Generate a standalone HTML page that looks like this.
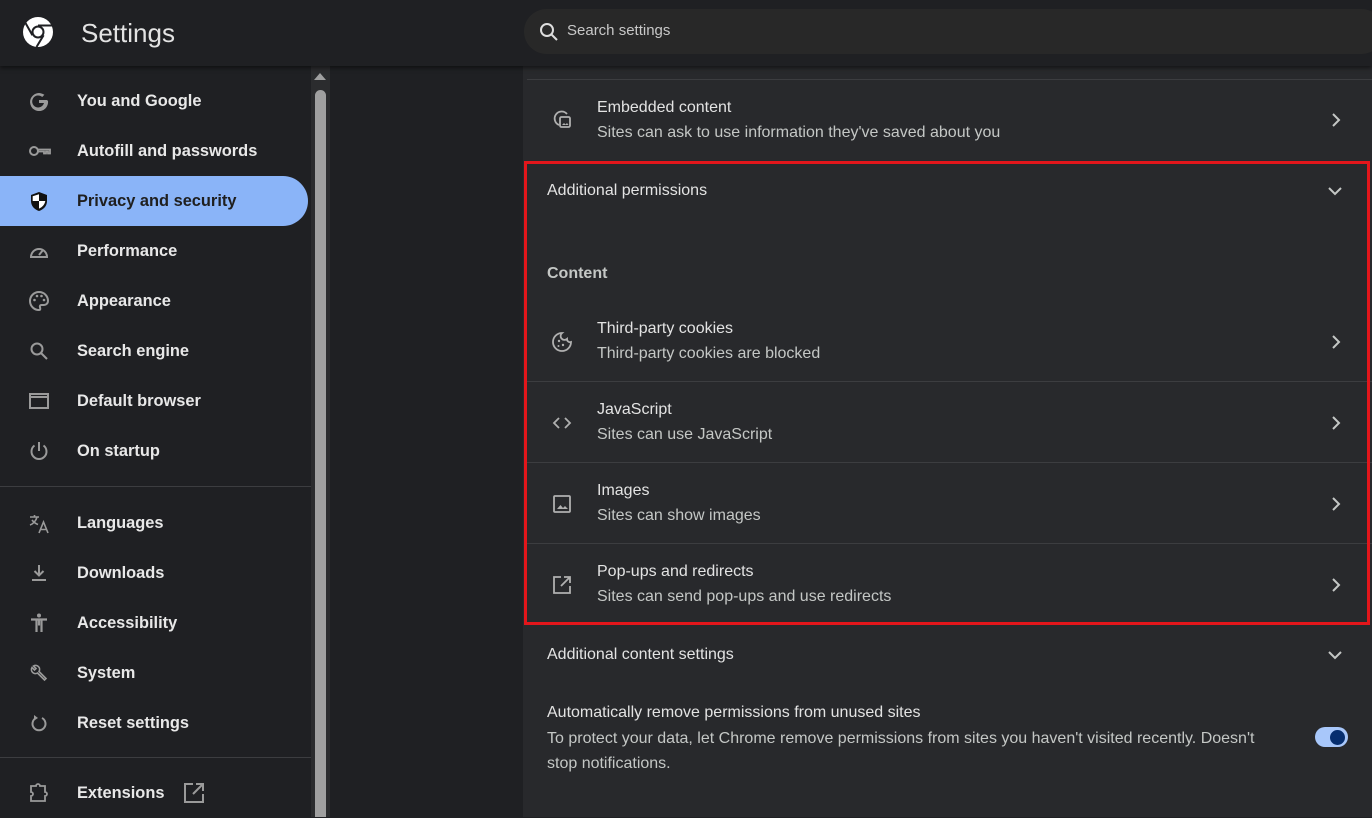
<!DOCTYPE html>
<html><head><meta charset="utf-8"><style>
*{margin:0;padding:0;box-sizing:border-box}
body{width:1372px;height:817px;overflow:hidden;background:#1f2023;font-family:"Liberation Sans",sans-serif;position:relative;color:#e3e3e3}
.a{position:absolute}
.hdr{left:0;top:0;width:1372px;height:66px;background:#1f2023;box-shadow:0 2px 4px rgba(0,0,0,.5);z-index:2}
.title{left:81px;top:18px;font-size:26px;color:#e3e3e3}
.search{left:524px;top:9px;width:860px;height:45px;border-radius:23px;background:#282828}
.search span{position:absolute;left:43px;top:13px;font-size:15px;color:#c8c8c8}
.nav{left:0;height:50px;width:308px;font-size:16.4px;font-weight:bold;color:#e8e8e8}
.nav span{position:absolute;left:77px;top:16px}
.nav svg{position:absolute;left:28px;top:14px}
.sel{background:#8ab4f8;border-radius:0 25px 25px 0;color:#1f1f1f}
.sep{left:0;width:311px;height:1px;background:#3c3d40}
.track{left:311px;top:66px;width:19px;height:751px;background:#2b2c2e}
.thumb{left:315px;top:90px;width:11px;height:727px;background:#a0a0a0;border-radius:6px 6px 0 0}
.card{left:523px;top:66px;width:849px;height:751px;background:#28292c}
.row{left:527px;width:845px;height:81px;border-top:1px solid #3c3d40}
.t1{position:absolute;left:70px;top:17px;font-size:16px;color:#e3e3e3}
.t2{position:absolute;left:70px;top:42px;font-size:16px;color:#c4c7c5}
.row svg.i{position:absolute;left:24px;top:30px}
.chev{position:absolute;right:30px;top:33px}
</style></head><body>
<div class="a hdr">
 <svg class="a" style="left:22px;top:16px" width="32" height="32" viewBox="0 0 32 32"><circle cx="16" cy="16" r="15" fill="#fff"/><circle cx="16" cy="16" r="6.5" fill="#1f2023"/><circle cx="16" cy="16" r="4.5" fill="#fff"/><path d="M16 9.5H30M10.4 19.2L3.5 7M21.6 19.2L14.5 31" stroke="#1f2023" stroke-width="2"/></svg>
 <div class="a title">Settings</div>
 <div class="a search"><svg style="position:absolute;left:15px;top:13px" width="20" height="20" viewBox="0 0 20 20"><circle cx="8" cy="8" r="6" stroke="#ddd" stroke-width="2" fill="none"/><path d="M12.5 12.5L18 18" stroke="#ddd" stroke-width="2"/></svg><span>Search settings</span></div>
</div>
<div class="a track"></div>
<svg class="a" style="left:313px;top:71px" width="14" height="10"><path d="M1 9L7 2L13 9Z" fill="#a0a0a0"/></svg>
<div class="a thumb"></div>

<div class="a nav" style="top:76px"><svg width="22" height="22" viewBox="0 0 22 22"><path d="M19 10H11v3h5a6 6 0 1 1-1.8-6l2.2-2.2A9 9 0 1 0 20 11z" fill="#9a9a9a"/></svg><span>You and Google</span></div>
<div class="a nav" style="top:126px"><svg width="24" height="22" viewBox="0 0 24 22"><circle cx="6" cy="11" r="4" stroke="#9a9a9a" stroke-width="2" fill="none"/><path d="M10 9.5h12v4h-2v-2h-2v2h-2v-2h-6" stroke="#9a9a9a" stroke-width="1.8" fill="none"/></svg><span>Autofill and passwords</span></div>
<div class="a nav sel" style="top:176px"><svg width="22" height="22" viewBox="0 0 22 22"><path d="M11 2L3 5v6c0 5 3.5 8.5 8 10 4.5-1.5 8-5 8-10V5z" fill="#111"/><path d="M11 11h6.3c-.6 3.5-3 6.2-6.3 7.6zM11 4.2V11H4.7V6.3z" fill="#fff"/></svg><span>Privacy and security</span></div>
<div class="a nav" style="top:226px"><svg width="22" height="22" viewBox="0 0 22 22"><path d="M3 17a8 8 0 1 1 16 0z" stroke="#9a9a9a" stroke-width="2" fill="none"/><path d="M11 15l4-5" stroke="#9a9a9a" stroke-width="2"/></svg><span>Performance</span></div>
<div class="a nav" style="top:276px"><svg width="22" height="22" viewBox="0 0 22 22"><path d="M11 2a9 9 0 0 0 0 18c1.5 0 1.5-1.5 1-2.5s0-2.5 1.5-2.5H16a4 4 0 0 0 4-4c0-5-4-9-9-9z" stroke="#9a9a9a" stroke-width="2" fill="none"/><circle cx="6.5" cy="10" r="1.3" fill="#9a9a9a"/><circle cx="9" cy="6" r="1.3" fill="#9a9a9a"/><circle cx="13.5" cy="6" r="1.3" fill="#9a9a9a"/><circle cx="16" cy="10" r="1.3" fill="#9a9a9a"/></svg><span>Appearance</span></div>
<div class="a nav" style="top:326px"><svg width="22" height="22" viewBox="0 0 22 22"><circle cx="9" cy="9" r="5.5" stroke="#9a9a9a" stroke-width="2" fill="none"/><path d="M13 13l6 6" stroke="#9a9a9a" stroke-width="2"/></svg><span>Search engine</span></div>
<div class="a nav" style="top:376px"><svg width="22" height="22" viewBox="0 0 22 22"><rect x="2" y="4" width="18" height="14" stroke="#9a9a9a" stroke-width="2" fill="none"/><path d="M2 7h18" stroke="#9a9a9a" stroke-width="2"/></svg><span>Default browser</span></div>
<div class="a nav" style="top:426px"><svg width="22" height="22" viewBox="0 0 22 22"><path d="M11 2v9M6.5 5.5a7.5 7.5 0 1 0 9 0" stroke="#9a9a9a" stroke-width="2" fill="none"/></svg><span>On startup</span></div>
<div class="a sep" style="top:486px"></div>
<div class="a nav" style="top:498px"><svg width="24" height="24" viewBox="0 0 24 24"><path d="M2 5h9M6.5 3v2M9 5c-1 4-4 7-7 8M4 8c1.5 2 3.5 3.5 6 4.5M11 21l4.5-11L20 21M12.5 17.5h6" stroke="#9a9a9a" stroke-width="1.6" fill="none"/></svg><span>Languages</span></div>
<div class="a nav" style="top:548px"><svg width="22" height="22" viewBox="0 0 22 22"><path d="M11 3v10M6.5 9l4.5 4.5L15.5 9M4 18h14" stroke="#9a9a9a" stroke-width="2" fill="none"/></svg><span>Downloads</span></div>
<div class="a nav" style="top:598px"><svg width="22" height="22" viewBox="0 0 22 22"><circle cx="11" cy="3.5" r="2" fill="#9a9a9a"/><path d="M3 7.5h16M11 7.5v6M8.5 8v12M13.5 8v12" stroke="#9a9a9a" stroke-width="2.2"/></svg><span>Accessibility</span></div>
<div class="a nav" style="top:648px"><svg width="22" height="22" viewBox="0 0 22 22"><path d="M4 5.5a4 4 0 0 0 5.5 5.5l7 7 1.5-1.5-7-7A4 4 0 0 0 5.5 4l2.5 2.5-1.5 1.5z" stroke="#9a9a9a" stroke-width="1.6" fill="none"/></svg><span>System</span></div>
<div class="a nav" style="top:698px"><svg width="22" height="22" viewBox="0 0 22 22"><path d="M8 6a6.5 6.5 0 1 0 6 0" stroke="#9a9a9a" stroke-width="2" fill="none"/><path d="M6 3l4 3-4 2.5z" fill="#9a9a9a"/></svg><span>Reset settings</span></div>
<div class="a sep" style="top:757px"></div>
<div class="a nav" style="top:768px"><svg width="22" height="22" viewBox="0 0 22 22"><path d="M3 4h5a2 2 0 0 1 4 0h5v6a2 2 0 0 1 0 4v5H3v-5a2 2 0 0 0 0-4z" stroke="#9a9a9a" stroke-width="1.8" fill="none"/></svg><span>Extensions</span><svg style="left:183px;top:14px" width="22" height="22" viewBox="0 0 22 22"><path d="M10 2H2v18h18v-8M13 2h7v7M20 2L10 12" stroke="#9a9a9a" stroke-width="2" fill="none"/></svg></div>

<div class="a card"></div>
<div class="a" style="left:527px;top:79px;width:845px;height:1px;background:#3c3d40"></div>
<div class="a row" style="top:80px;border-top:none">
 <svg class="i" style="top:28px" width="22" height="22" viewBox="0 0 22 22"><path d="M8 17A7 7 0 1 1 16 6" stroke="#b0b0b0" stroke-width="1.8" fill="none"/><rect x="9" y="9" width="10" height="10" rx="1.5" stroke="#b0b0b0" stroke-width="1.8" fill="#28292c"/><path d="M11 17l2-2 1.5 1.5L16 15l1.5 2z" fill="#b0b0b0"/></svg>
 <div class="t1" style="top:19px">Embedded content</div><div class="t2" style="top:44px">Sites can ask to use information they've saved about you</div>
 <svg class="chev" style="top:32px" width="12" height="16"><path d="M3 2l6 6-6 6" stroke="#c4c7c5" stroke-width="2" fill="none"/></svg>
</div>
<div class="a" style="left:547px;top:182px;font-size:16px">Additional permissions</div>
<svg class="a" style="left:1327px;top:185px" width="16" height="12"><path d="M2 3l6 6 6-6" stroke="#c4c7c5" stroke-width="2" fill="none"/></svg>
<div class="a" style="left:547px;top:265px;font-size:16px;font-weight:bold;color:#c4c7c5">Content</div>

<div class="a row" style="top:301px;border-top:none">
 <svg class="i" width="22" height="22" viewBox="0 0 22 22"><path d="M11 2a9 9 0 1 0 9 9 3 3 0 0 1-4-3 3 3 0 0 1-5-6z" stroke="#b0b0b0" stroke-width="1.8" fill="none"/><circle cx="8" cy="10" r="1.2" fill="#b0b0b0"/><circle cx="12" cy="14" r="1.2" fill="#b0b0b0"/><circle cx="7.5" cy="15" r="1" fill="#b0b0b0"/></svg>
 <div class="t1" style="top:19px">Third-party cookies</div><div class="t2" style="top:44px">Third-party cookies are blocked</div>
 <svg class="chev" width="12" height="16"><path d="M3 2l6 6-6 6" stroke="#c4c7c5" stroke-width="2" fill="none"/></svg>
</div>
<div class="a row" style="top:381px">
 <svg class="i" width="22" height="22" viewBox="0 0 22 22"><path d="M8 6l-5 5 5 5M14 6l5 5-5 5" stroke="#b0b0b0" stroke-width="1.8" fill="none"/></svg>
 <div class="t1" style="top:19px">JavaScript</div><div class="t2" style="top:44px">Sites can use JavaScript</div>
 <svg class="chev" width="12" height="16"><path d="M3 2l6 6-6 6" stroke="#c4c7c5" stroke-width="2" fill="none"/></svg>
</div>
<div class="a row" style="top:462px">
 <svg class="i" width="22" height="22" viewBox="0 0 22 22"><rect x="3" y="3" width="16" height="16" rx="1" stroke="#b0b0b0" stroke-width="1.8" fill="none"/><path d="M6 16l3.5-4 2.5 3 2-2 3 3z" fill="#b0b0b0"/></svg>
 <div class="t1" style="top:19px">Images</div><div class="t2" style="top:44px">Sites can show images</div>
 <svg class="chev" width="12" height="16"><path d="M3 2l6 6-6 6" stroke="#c4c7c5" stroke-width="2" fill="none"/></svg>
</div>
<div class="a row" style="top:543px">
 <svg class="i" width="22" height="22" viewBox="0 0 22 22"><path d="M10 3H3v16h16v-7M13 3h6v6M19 3l-9 9" stroke="#b0b0b0" stroke-width="1.8" fill="none"/></svg>
 <div class="t1" style="top:19px">Pop-ups and redirects</div><div class="t2" style="top:44px">Sites can send pop-ups and use redirects</div>
 <svg class="chev" width="12" height="16"><path d="M3 2l6 6-6 6" stroke="#c4c7c5" stroke-width="2" fill="none"/></svg>
</div>
<div class="a" style="left:524px;top:161px;width:846px;height:464px;border:3px solid #e3161b"></div>

<div class="a" style="left:547px;top:646px;font-size:16px">Additional content settings</div>
<svg class="a" style="left:1327px;top:649px" width="16" height="12"><path d="M2 3l6 6 6-6" stroke="#c4c7c5" stroke-width="2" fill="none"/></svg>
<div class="a" style="left:547px;top:704px;font-size:16px">Automatically remove permissions from unused sites</div>
<div class="a" style="left:547px;top:726px;width:740px;font-size:16px;line-height:25px;color:#c4c7c5">To protect your data, let Chrome remove permissions from sites you haven't visited recently. Doesn't stop notifications.</div>
<div class="a" style="left:1315px;top:727px;width:33px;height:20px;border-radius:10px;background:#a8c7fa"></div>
<div class="a" style="left:1330px;top:730px;width:15px;height:15px;border-radius:50%;background:#062e6f"></div>
</body></html>
